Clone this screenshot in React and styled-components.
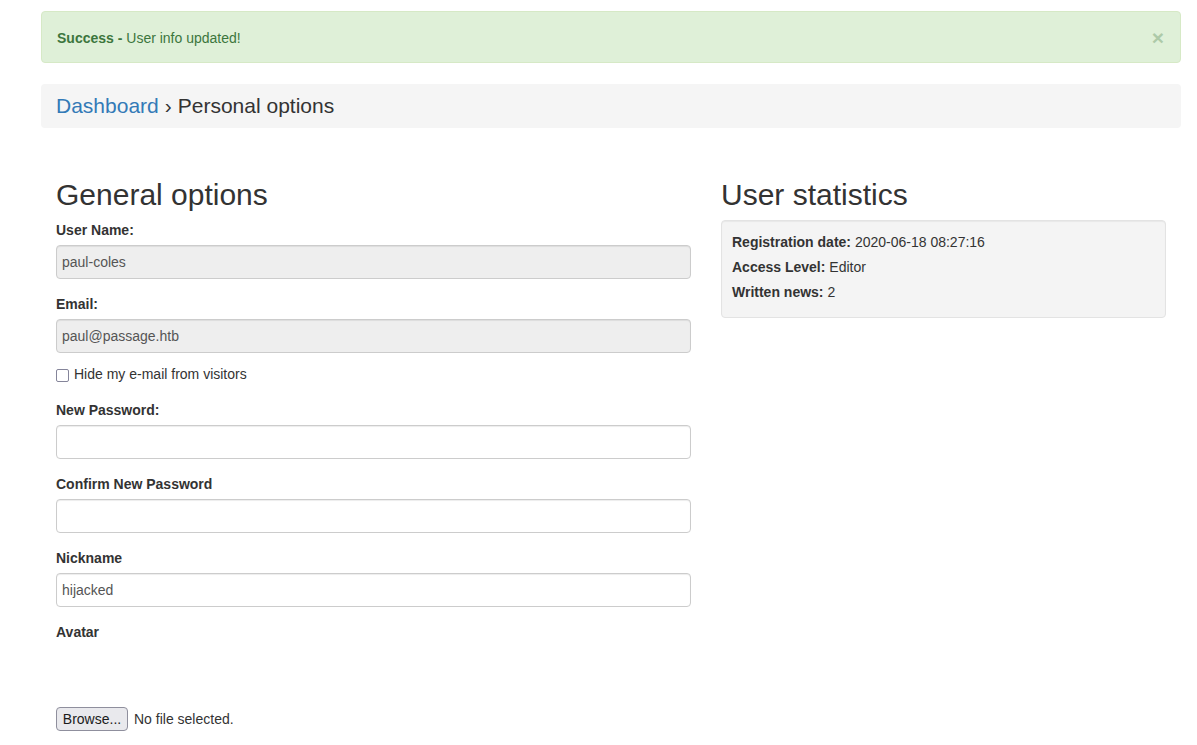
import React from 'react';
import styled, { createGlobalStyle } from 'styled-components';

const GlobalStyle = createGlobalStyle`
  html, body {
    margin: 0;
    padding: 0;
    background: #fff;
  }
  body {
    font-family: "Liberation Sans", Arial, Helvetica, sans-serif;
    font-size: 14px;
    line-height: 20px;
    color: #333;
  }
  * { box-sizing: border-box; }
`;

const Page = styled.div`
  padding: 11px 16px 0 41px;
`;

const Alert = styled.div`
  display: flex;
  align-items: center;
  justify-content: space-between;
  background: #dff0d8;
  border: 1px solid #d6e9c6;
  border-radius: 4px;
  color: #3c763d;
  padding: 15px 16px 14px 15px;
  margin-bottom: 21px;
  line-height: 20px;
`;

const Close = styled.span`
  font-size: 21px;
  font-weight: 700;
  line-height: 21px;
  color: #3c763d;
  opacity: 0.3;
  cursor: pointer;
`;

const Breadcrumb = styled.div`
  background: #f5f5f5;
  border-radius: 4px;
  height: 44px;
  padding: 0 15px;
  display: flex;
  align-items: center;
  font-size: 21px;
  line-height: 28px;
  color: #333;
  margin-bottom: 30px;
`;

const Crumb = styled.a`
  color: #337ab7;
  text-decoration: none;
`;

const Sep = styled.span`
  margin: 0 6px;
`;

const Row = styled.div`
  display: grid;
  grid-template-columns: 665px 475px;
`;

const Column = styled.div`
  padding: 0 15px;
`;

const Heading = styled.h2`
  font-size: 30px;
  font-weight: 500;
  line-height: 33px;
  margin: 20px 0 9px;
  color: #333;
`;

const Label = styled.label`
  display: block;
  font-weight: 700;
  margin-bottom: 5px;
`;

const Field = styled.div`
  margin-bottom: ${p => p.$gap || 15}px;
`;

const Input = styled.input`
  display: block;
  width: 100%;
  height: 34px;
  padding: 6px 5px;
  font-family: inherit;
  font-size: 14px;
  color: #555;
  background: ${p => (p.disabled ? '#eee' : '#fff')};
  border: 1px solid #ccc;
  border-radius: 4px;
  box-shadow: inset 0 1px 1px rgba(0, 0, 0, 0.075);
  outline: none;
  &:disabled { color: #555; -webkit-text-fill-color: #555; opacity: 1; }
`;

const CheckRow = styled.label`
  display: flex;
  align-items: center;
  gap: 5px;
  margin-bottom: 16px;
`;

const Box = styled.span`
  display: inline-block;
  width: 13px;
  height: 13px;
  border: 1px solid #85859a;
  border-radius: 2px;
  background: #fff;
  margin-top: 2px;
`;

const AvatarSpace = styled.div`
  height: 60px;
`;

const FileRow = styled.div`
  display: flex;
  align-items: center;
  gap: 6px;
`;

const Browse = styled.button`
  width: 72px;
  height: 24px;
  padding: 0;
  font-family: "Liberation Sans", Arial, sans-serif;
  font-size: 14px;
  color: #1b1b1b;
  background: #e9e9ed;
  border: 1px solid #8f8f9d;
  border-radius: 4px;
`;

const Well = styled.div`
  background: #f4f4f4;
  border: 1px solid #e3e3e3;
  border-radius: 4px;
  box-shadow: inset 0 1px 1px rgba(0, 0, 0, 0.05);
  padding: 11px 10px 15px;
  display: flex;
  flex-direction: column;
  gap: 5px;
`;

const Stat = styled.div`
  line-height: 20px;
  b { font-weight: 700; }
`;

const stats = [
  ['Registration date:', '2020-06-18 08:27:16'],
  ['Access Level:', 'Editor'],
  ['Written news:', '2'],
];

export default function App() {
  return (
    <>
      <GlobalStyle />
      <Page>
        <Alert>
          <span><b>Success - </b>User info updated!</span>
          <Close>×</Close>
        </Alert>
        <Breadcrumb>
          <Crumb href="#">Dashboard</Crumb>
          <Sep>›</Sep>
          <span>Personal options</span>
        </Breadcrumb>
        <Row>
          <Column>
            <Heading>General options</Heading>
            <Field>
              <Label>User Name:</Label>
              <Input disabled value="paul-coles" readOnly />
            </Field>
            <Field $gap={11}>
              <Label>Email:</Label>
              <Input disabled value="paul@passage.htb" readOnly />
            </Field>
            <CheckRow>
              <Box />
              Hide my e-mail from visitors
            </CheckRow>
            <Field>
              <Label>New Password:</Label>
              <Input type="password" />
            </Field>
            <Field>
              <Label>Confirm New Password</Label>
              <Input type="password" />
            </Field>
            <Field>
              <Label>Nickname</Label>
              <Input defaultValue="hijacked" />
            </Field>
            <Label>Avatar</Label>
            <AvatarSpace />
            <FileRow>
              <Browse>Browse...</Browse>
              <span>No file selected.</span>
            </FileRow>
          </Column>
          <Column>
            <Heading>User statistics</Heading>
            <Well>
              {stats.map(([k, v]) => (
                <Stat key={k}><b>{k}</b> {v}</Stat>
              ))}
            </Well>
          </Column>
        </Row>
      </Page>
    </>
  );
}
